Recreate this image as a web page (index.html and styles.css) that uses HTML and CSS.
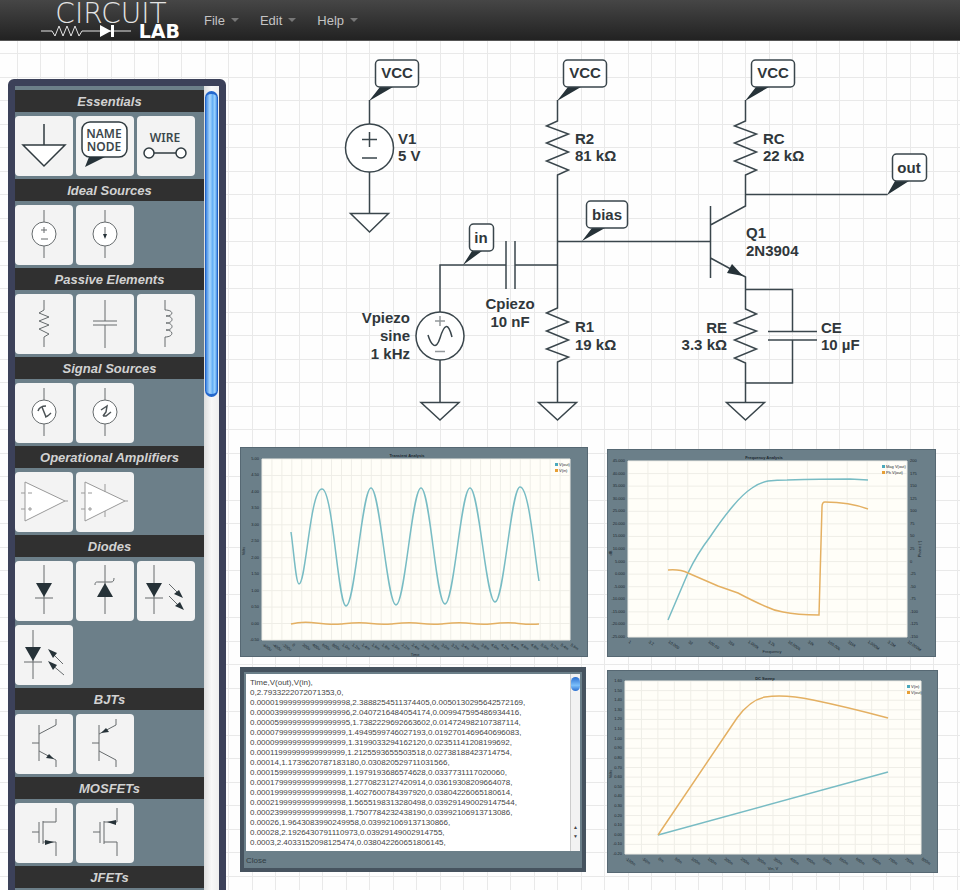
FILE: index.html
```html
<!DOCTYPE html>
<html lang="en">
<head>
  <meta charset="UTF-8">
  <meta name="viewport" content="width=device-width, initial-scale=1.0">
  <title>CircuitLab</title>
  <link rel="stylesheet" href="styles.css">
</head>
<body>
  <header class="topbar">
    <svg class="logo" viewBox="0 0 140 40" role="img" aria-label="CircuitLab">
      <text class="logo-circuit" x="70" y="23" text-anchor="middle">CIRCUIT</text>
      <path class="logo-line" d="M0 31h11l3 5 4-10 4 10 4-10 4 10 4-10 4 10 3-5h49"/>
      <path class="logo-diode" d="M59 25v12l11-6zM70 25h3v12h-3z"/>
      <text class="logo-lab" x="139" y="38" text-anchor="end">LAB</text>
    </svg>
    <nav class="menu">
      <button>File <span class="caret"></span></button>
      <button>Edit <span class="caret"></span></button>
      <button>Help <span class="caret"></span></button>
    </nav>
  </header>

  <main class="editor">
    <aside class="palette">
      <div class="parts">
        <h2>Essentials</h2>
        <div class="tiles">
          <button class="tile" aria-label="Ground"><svg class="strong" viewBox="0 0 58 60"><path class="fill-white" d="M29 8v21M8 29h42L29 50z"/></svg></button>
          <button class="tile" aria-label="Name node">
            <svg class="strong" viewBox="0 0 58 60">
              <rect class="fill-white" x="6" y="6" width="45" height="35" rx="8"/>
              <path class="fill-dark" d="M13 41h16L9 51z"/>
              <text x="28" y="22">NAME</text>
              <text x="28" y="35">NODE</text>
            </svg>
          </button>
          <button class="tile" aria-label="Wire">
            <svg class="strong" viewBox="0 0 58 60">
              <text x="28" y="26">WIRE</text>
              <path d="M17 37h22"/><circle class="fill-white" cx="12" cy="37" r="5"/><circle class="fill-white" cx="44" cy="37" r="5"/>
            </svg>
          </button>
        </div>

        <h2>Ideal Sources</h2>
        <div class="tiles">
          <button class="tile" aria-label="Voltage source"><svg viewBox="0 0 58 60"><path d="M29 5v48"/><circle class="fill-white" cx="29" cy="29" r="12"/><path d="M26 25h6M29 22v6M26 34h7"/></svg></button>
          <button class="tile" aria-label="Current source"><svg viewBox="0 0 58 60"><path d="M29 5v48"/><circle class="fill-white" cx="29" cy="29" r="12"/><path d="M29 22v10"/><path class="fill-dark" d="M27 29h4l-2 5z"/></svg></button>
        </div>

        <h2>Passive Elements</h2>
        <div class="tiles">
          <button class="tile" aria-label="Resistor"><svg viewBox="0 0 58 60"><path d="M29 6v10l-5 3 10 4-10 4 10 4-10 4 10 5-5 3v10"/></svg></button>
          <button class="tile" aria-label="Capacitor"><svg viewBox="0 0 58 60"><path d="M29 6v21M17 27h24M17 31h24M29 31v23"/></svg></button>
          <button class="tile" aria-label="Inductor"><svg viewBox="0 0 58 60"><path d="M28 6v10c9 0 9 6 1 6 8 0 8 7 0 7 8 0 8 7 0 7 8 0 8 7-1 7v10"/></svg></button>
        </div>

        <h2>Signal Sources</h2>
        <div class="tiles">
          <button class="tile" aria-label="Sine source"><svg viewBox="0 0 58 60"><path d="M29 5v48"/><circle class="fill-white" cx="29" cy="29" r="12"/><path class="wave" d="M23 28c1-3 4-5 8-5M27 24l4 10M30 34c2 0 4-2 6-4"/></svg></button>
          <button class="tile" aria-label="Square source"><svg viewBox="0 0 58 60"><path d="M29 5v48"/><circle class="fill-white" cx="29" cy="29" r="12"/><path class="wave" d="M25 27l6-4-1 6-3 4M27 33h3l5-4"/></svg></button>
        </div>

        <h2>Operational Amplifiers</h2>
        <div class="tiles">
          <button class="tile" aria-label="Op-amp"><svg class="light" viewBox="0 0 58 60"><path class="fill-white" d="M10 10v39l40-20z"/><path d="M6 21h4M6 37h4M50 29h3M13 21h4M13 37h4M15 35v4"/></svg></button>
          <button class="tile" aria-label="Op-amp with supply"><svg class="light" viewBox="0 0 58 60"><path class="fill-white" d="M9 10v39l40-20z"/><path d="M5 21h4M5 37h4M49 29h3M12 21h4M12 37h4M14 35v4M29 12v8M29 39v6"/></svg></button>
        </div>

        <h2>Diodes</h2>
        <div class="tiles">
          <button class="tile" aria-label="Diode"><svg viewBox="0 0 58 60"><path d="M29 4v49M20 37h18"/><path class="fill-dark" d="M21 22h16l-8 14z"/></svg></button>
          <button class="tile" aria-label="Zener diode"><svg viewBox="0 0 58 60"><path d="M29 4v49M19 24c0-3 1-3 3-3h13c2 0 3-1 3-4"/><path class="fill-dark" d="M21 36h16l-8-14z"/></svg></button>
          <button class="tile" aria-label="LED"><svg viewBox="0 0 58 60"><path d="M17 4v49M8 37h18M32 23l12 12M32 35l12 12"/><path class="fill-dark" d="M9 22h16l-8 14zM46 37l-9-4 5-4zM47 49l-9-4 5-4z"/></svg></button>
          <button class="tile" aria-label="Photodiode"><svg viewBox="0 0 58 60"><path d="M18 5v49M9 37h18M48 39L36 27M49 50L36 39"/><path class="fill-dark" d="M10 22h16l-8 14zM33 24l9 4-4 5zM33 36l9 4-4 5z"/></svg></button>
        </div>

        <h2>BJTs</h2>
        <div class="tiles">
          <button class="tile" aria-label="NPN transistor"><svg viewBox="0 0 58 60"><path d="M24 11v36M17 29h7M24 20l17-9V5M24 37l17 9v7"/><path class="fill-dark" d="M39 45l-8-1 3-4z"/></svg></button>
          <button class="tile" aria-label="PNP transistor"><svg viewBox="0 0 58 60"><path d="M23 11v36M16 29h7M23 20l17-9V5M23 37l17 9v7"/><path class="fill-dark" d="M25 19l5-5 3 4z"/></svg></button>
        </div>

        <h2>MOSFETs</h2>
        <div class="tiles">
          <button class="tile" aria-label="N-channel MOSFET"><svg viewBox="0 0 58 60"><path d="M17 29h7M24 19v21M28 18v23M28 19h13V5M28 39h13v14"/><path class="fill-dark" d="M30 37l9 2-9 3z"/></svg></button>
          <button class="tile" aria-label="P-channel MOSFET"><svg viewBox="0 0 58 60"><path d="M17 29h7M24 19v21M28 18v23M28 19h13V5M28 39h13v14"/><path class="fill-dark" d="M40 17l-9 2 9 3z"/></svg></button>
        </div>

        <h2>JFETs</h2>
      </div>
      <div class="scrollbar"><div class="thumb"></div></div>
    </aside>

    <section class="workspace">
      <svg class="schematic" viewBox="226 41 734 406" role="img" aria-label="Transistor amplifier schematic">
        <!-- supply -->
        <path d="M369.500 100v24M369.500 172v41"/>
        <circle cx="369.500" cy="148" r="24"/>
        <path d="M362 139.500h15M369.500 132v15M362 158h15"/>
        <path class="ground" d="M350.500 213.500h38L369.500 232z"/>
        <text x="398" y="144">V1</text><text x="398" y="161">5 V</text>

        <!-- bias divider -->
        <path d="M557.500 100v21l-11 5 22 8-22 9 22 9-22 9 22 9-11 5v133l-11 5 22 9-22 9 22 9-22 9 22 8-11 5v40"/>
        <path class="ground" d="M538.500 402.500h38L557.500 420z"/>
        <text x="575" y="144">R2</text><text x="575" y="161">81 kΩ</text>
        <text x="575" y="332">R1</text><text x="575" y="350">19 kΩ</text>

        <!-- piezo input -->
        <path d="M440 312v-47h66M515 265h42M506 241v48M515 241v48M440 360v42"/>
        <circle cx="440" cy="336" r="24"/>
        <path class="sine" d="M428 335c3 10 8 16 12 3s8-17 12-1"/>
        <path class="faint" d="M435 321h10M440 316v10M435 351.500h10"/>
        <path class="ground" d="M421 402.500h38L440 420z"/>
        <g class="end"><text x="410" y="323">Vpiezo</text><text x="410" y="341">sine</text><text x="410" y="359">1 kHz</text></g>
        <g class="middle"><text x="510" y="309">Cpiezo</text><text x="510" y="327">10 nF</text></g>

        <!-- transistor stage -->
        <path d="M745.500 100v21l-11 5 22 8-22 9 22 9-22 9 22 9-11 5v31l-35 19M745.500 194.500h142M557.500 241.500h153M710.500 206v72M710.500 258l35 19v32l11 5-22 9 22 8-22 9 22 9-22 9 11 5v39M745.500 289.500h47v42M768 331.500h49M768 340h49M792.500 340v43h-47"/>
        <path class="fill-dark" d="M743 276l-16-3 5-9z"/>
        <path class="ground" d="M726.500 402.500h38L745.500 420z"/>
        <text x="763" y="144">RC</text><text x="763" y="161">22 kΩ</text>
        <text x="746" y="238">Q1</text><text x="746" y="256">2N3904</text>
        <g class="end"><text x="727" y="333">RE</text><text x="727" y="350">3.3 kΩ</text></g>
        <text x="821" y="333">CE</text><text x="821" y="350">10 µF</text>

        <!-- node names -->
        <g class="middle">
          <path class="fill-dark" d="M380 87h13l-24 14zM568 87h13l-24 14zM756 87h13l-24 14zM592 228h13l-23 13zM472 251h10l-19 14zM895 181h14l-22 14z"/>
          <rect x="375.500" y="60" width="43" height="27" rx="4"/><text x="397" y="78">VCC</text>
          <rect x="563.500" y="60" width="43" height="27" rx="4"/><text x="585" y="78">VCC</text>
          <rect x="751.500" y="60" width="43" height="27" rx="4"/><text x="773" y="78">VCC</text>
          <rect x="586.500" y="201" width="41" height="27" rx="4"/><text x="607" y="220">bias</text>
          <rect x="469.500" y="224" width="24" height="27" rx="4"/><text x="481" y="243">in</text>
          <rect x="892.500" y="154" width="34" height="27" rx="4"/><text x="909" y="173">out</text>
        </g>
      </svg>

      <div class="results">
        <div class="column">
          <svg class="chart" id="transient" viewBox="0 0 348 210" role="img" aria-label="Transient analysis">
            <g class="axes"></g>
            <path class="trace-a" d="M51 85C54 106 56 137 59 137C66 137 70 42 82 42C93 42 98 159 106 159C115 159 122 41 131 41C140 41 147 158 156 158C165 158 172 41 181 41C190 41 196 157 205 157C214 157 221 41 230 41C239 41 246 155 255 155C264 155 271 40 280 40C289 40 294 104 299 134"/>
            <path class="trace-b" d="M51 177C59 175 68 175 76 176S92 178 101 177S117 175 126 176S142 178 151 177S167 175 176 176S192 178 201 177S217 175 226 176S242 178 250 177S266 175 275 176S290 178 299 177"/>
          </svg>
          <div class="export">
            <div class="export-box">
              <textarea aria-label="Simulation data" readonly wrap="off">Time,V(out),V(in),
0,2.7933222072071353,0,
0.000019999999999999998,2.3888254511374405,0.0050130295642572169,
0.000039999999999999996,2.0407216484054174,0.009947595486934416,
0.000059999999999999995,1.7382229692663602,0.014724982107387114,
0.00007999999999999999,1.4949599746027193,0.0192701469640696083,
0.00009999999999999999,1.3199033294162120,0.02351141208199692,
0.00011999999999999999,1.2125593655503518,0.02738188423714754,
0.00014,1.1739620787183180,0.030820529711031566,
0.00015999999999999999,1.1979193686574628,0.0337731117020060,
0.00017999999999999998,1.2770823127420914,0.03619308209664078,
0.00019999999999999998,1.4027600784397920,0.03804226065180614,
0.00021999999999999998,1.5655198313280498,0.039291490029147544,
0.00023999999999999998,1.7507784232438190,0.03992106913713086,
0.00026,1.9643083990249958,0.039921069137130866,
0.00028,2.1926430791110973,0.03929149002914755,
0.0003,2.4033152098125474,0.038042260651806145,</textarea>
              <div class="mini-scroll"><span class="mini-thumb"></span><span class="arrow">▲</span><span class="arrow">▼</span></div>
            </div>
            <button class="close">Close</button>
          </div>
        </div>
        <div class="column right">
          <svg class="chart narrow" id="frequency" viewBox="0 0 329 208" role="img" aria-label="Frequency analysis">
            <g class="axes"></g>
            <path class="trace-a" d="M61 171L81 124Q90 105 103 88Q115 70 126 57Q136 45 145 39Q152 34 161 32Q170 31 180 31Q215 30 243 30L261 31"/>
            <path class="trace-b" d="M61 121Q73 120 81 124L111 137L131 144Q148 153 160 158Q168 162 176 163Q190 166 212 166L215 58Q215 53 218 53Q242 53 261 60"/>
          </svg>
          <svg class="chart" id="sweep" viewBox="0 0 331 203" role="img" aria-label="DC sweep">
            <g class="axes"></g>
            <path class="trace-a" d="M51 165L281 102"/>
            <path class="trace-b" d="M51 165L130 48Q143 30 158 27Q178 24 206 30Q240 37 281 48"/>
          </svg>
        </div>
      </div>
    </section>
  </main>

  <script src="charts.js"></script>
</body>
</html>
```
FILE: styles.css
```css
* {
  margin: 0;
  padding: 0;
  box-sizing: border-box;
}

body {
  font-family: "Liberation Sans", Arial, sans-serif;
  height: 100vh;
  overflow: hidden;
  display: flex;
  flex-direction: column;
  background-color: #fefefe;
}

button {
  border: none;
  background: none;
  font-family: inherit;
  cursor: pointer;
}

svg {
  display: block;
}

/* Top bar */
.topbar {
  display: flex;
  flex: none;
  height: 41px;
  padding-left: 41px;
  background: linear-gradient(#464646, #222);
  border-bottom: 1px solid #555;
}

.logo {
  width: 140px;
  height: 40px;
  overflow: visible;
}

.logo-circuit {
  font-family: "DejaVu Sans", sans-serif;
  font-weight: 200;
  font-size: 28px;
  fill: #e4e4e4;
}

.logo-lab {
  font-family: "DejaVu Sans", sans-serif;
  font-weight: bold;
  font-size: 19px;
  fill: #fff;
}

.logo-line {
  fill: none;
  stroke: #e4e4e4;
}

.logo-diode {
  fill: #fff;
}

.menu {
  display: flex;
  gap: 21px;
  padding-left: 23px;
}

.menu button {
  display: flex;
  align-items: center;
  gap: 6px;
  font-size: 13px;
  color: #c4c4c4;
}

.caret {
  border: 4px solid transparent;
  border-top-color: #777;
  border-bottom: none;
}

/* Editor, drawn on 47px graph paper with a line in the middle */
.editor {
  display: flex;
  flex: 1;
  min-height: 0;
  background-image:
    linear-gradient(90deg, #e9e9e9 1px, transparent 1px),
    linear-gradient(90deg, #e9e9e9 1px, transparent 1px),
    linear-gradient(#e9e9e9 1px, transparent 1px),
    linear-gradient(#e9e9e9 1px, transparent 1px);
  background-size: 47px 47px;
  background-position: 17px 0, 40px 0, 0 12px, 0 36px;
}

/* Parts palette */
.palette {
  display: flex;
  flex: none;
  width: 218px;
  margin: 38px 0 -20px 8px;
  border: 7px solid #3c4159;
  border-radius: 6px;
  background-color: #6c7f89;
  overflow: hidden;
}

.parts {
  flex: 1;
  padding-top: 4px;
}

.parts h2 {
  height: 22px;
  line-height: 23px;
  font-size: 13px;
  font-style: italic;
  text-align: center;
  color: #d2d2d2;
  background-color: #303030;
}

.tiles {
  display: flex;
  flex-wrap: wrap;
  gap: 4px 3px;
  padding: 4px 0 3px;
}

.tile {
  width: 58px;
  height: 60px;
  border-radius: 4px;
  background-color: #f3f3f3;
}

.tile svg {
  width: 100%;
  fill: none;
  stroke: #666b6d;
}

.tile svg.light {
  stroke: #999;
}

.tile svg.strong {
  stroke: #303b40;
  stroke-width: 1.500;
}

.tile .wave {
  stroke: #4c5356;
  stroke-width: 1.500;
}

.tile text {
  font-family: "Noto Sans", sans-serif;
  font-weight: 600;
  font-size: 12px;
  text-anchor: middle;
  fill: #3c474c;
  stroke: none;
}

.tile .fill-white {
  fill: #fff;
}

.tile .fill-dark {
  fill: #263238;
  stroke: none;
}

.scrollbar {
  width: 15px;
  background: linear-gradient(90deg, #ddd, #f8f8f8 50%, #eee);
}

.thumb {
  height: 306px;
  margin: 5px 1px 0;
  border: 1px solid #2367cc;
  border-width: 3px 1px;
  border-radius: 7px;
  background: linear-gradient(90deg, #3e86e0, #a9d8ff 35%, #64aef5 60%, #9bd3ff 80%, #4288df);
}

/* Schematic */
.workspace {
  flex: 1;
  min-width: 0;
}

.schematic {
  width: 100%;
  fill: none;
  stroke: #3a464c;
  stroke-width: 1.500;
}

.schematic rect,
.schematic circle,
.schematic .ground {
  fill: #fff;
}

.schematic .fill-dark {
  fill: #263238;
  stroke: none;
}

.schematic .faint {
  stroke: #92989b;
}

.schematic text {
  font-weight: bold;
  font-size: 15px;
  fill: #30373b;
  stroke: none;
}

.schematic .middle text {
  text-anchor: middle;
}

.schematic .end text {
  text-anchor: end;
}

/* Results */
.results {
  display: grid;
  grid-template-columns: 348fr 331fr;
  gap: 19px;
  padding: 0 22px 0 14px;
}

.column {
  display: flex;
  flex-direction: column;
  gap: 10px;
}

.column.right {
  gap: 13px;
  padding-top: 2px;
}

.chart {
  background-color: #6b7f89;
  outline: 1px solid #566873;
  outline-offset: -1px;
}

.narrow {
  margin-right: 2px;
}

.chart .plot {
  fill: #fffef8;
}

.chart .lines {
  stroke: #efeee7;
  stroke-width: 1;
}

.chart text {
  font-size: 4px;
  fill: #1c282f;
}

.chart .title {
  font-weight: bold;
}

.trace-a,
.trace-b {
  fill: none;
  stroke: #78bcc4;
  stroke-width: 1.500;
}

.trace-b {
  stroke: #e4b062;
}

.key-a {
  fill: #4ba9bd;
}

.key-b {
  fill: #e79f35;
}

/* Data export */
.export {
  margin-right: 2px;
  padding: 2px 2px 0;
  border: 4px solid #46535f;
  border-top-width: 5px;
  background-color: #6b7f89;
}

.export-box {
  display: flex;
  height: 177px;
  background-color: #fff;
}

.export textarea {
  flex: 1;
  min-width: 0;
  padding: 4px 4px 0;
  border: none;
  resize: none;
  overflow: hidden;
  font-family: inherit;
  font-size: 8px;
  line-height: 10px;
  color: #444;
}

.mini-scroll {
  display: flex;
  flex-direction: column;
  width: 10px;
  padding: 3px 0 10px;
  background-color: #f2f2f2;
  border-left: 1px solid #ccc;
}

.mini-thumb {
  height: 14px;
  margin-bottom: auto;
  border-radius: 5px;
  background: linear-gradient(#2b6fd0, #7cc0fb 60%, #2b6fd0);
}

.arrow {
  font-size: 5px;
  line-height: 9px;
  text-align: center;
  color: #444;
}

.close {
  display: block;
  height: 15px;
  margin-top: 2px;
  font-size: 8px;
  color: #303c43;
}
```
FILE: charts.js
```js
// Axes, grid lines and legends for the three result charts
const charts = {
  transient: {
    plot: [22, 12, 308, 181],
    title: "Transient Analysis",
    titleX: 167,
    xLabel: "Time",
    yLabel: "Volts",
    x: range(-0.6, 0.2, 32, v => Math.abs(v) < 0.01 ? "0" : v < 1 ? Math.round(v * 1000) + "u" : v.toFixed(1) + "m"),
    y: range(5, -0.5, 12, v => v === 0 ? "0.00" : v.toFixed(2)),
    legend: ["V(out)", "V(in)"],
    legendX: 316
  },
  frequency: {
    plot: [21, 12, 279, 176],
    title: "Frequency Analysis",
    titleX: 157,
    xLabel: "Frequency",
    yLabel: "dB",
    rightLabel: "Phase (°)",
    x: ["1", "3.2", "10.000", "32", "100.00", "316", "1.000k", "3.2k", "10.000k", "32k", "100.00k", "316k", "1.000M", "3.2M", "10.000M"],
    y: range(45, -5, 15, v => v.toFixed(3)),
    right: range(200, -25, 15, v => String(v)),
    legend: ["Mag V(out)", "Ph V(out)"],
    legendX: 276
  },
  sweep: {
    plot: [18, 11, 296, 173],
    title: "DC Sweep",
    titleX: 158,
    xLabel: "Vin, V",
    yLabel: "Volts",
    x: range(-100, 50, 19, v => v + "m"),
    y: range(1.6, -0.1, 19, v => v.toFixed(2)),
    legend: ["V(in)", "V(out)"],
    legendX: 301
  }
};

function range(start, step, count, format) {
  return Array.from({ length: count }, (_, i) => format(Math.round((start + step * i) * 1000) / 1000));
}

function text(x, y, label, extra) {
  return `<text x="${x}" y="${y}" ${extra || ""}>${label}</text>`;
}

Object.keys(charts).forEach(id => {
  const c = charts[id];
  const [left, top, width, height] = c.plot;
  const bottom = top + height;
  let lines = "";
  let out = `<rect class="plot" x="${left}" y="${top}" width="${width}" height="${height}"/>`;

  c.x.forEach((label, i) => {
    const x = left + width * i / (c.x.length - 1);
    lines += `M${x} ${top}V${bottom}`;
    out += text(x + 1, bottom + 5, label, `transform="rotate(35 ${x} ${bottom + 4})"`);
  });
  c.y.forEach((label, i) => {
    const y = top + height * i / (c.y.length - 1);
    lines += `M${left} ${y}H${left + width}`;
    out += text(left - 3, y + 1, label, 'text-anchor="end"');
    if (c.right) out += text(left + width + 3, y + 1, c.right[i]);
  });
  out += `<path class="lines" d="${lines}"/>`;

  out += text(c.titleX, 10, c.title, 'class="title" text-anchor="middle"');
  out += text(c.titleX + 8, bottom + 16, c.xLabel, 'text-anchor="middle"');
  out += text(5, 104, c.yLabel, 'text-anchor="middle" transform="rotate(-90 5 104)"');
  if (c.rightLabel) out += text(314, 100, c.rightLabel, 'text-anchor="middle" transform="rotate(-90 314 100)"');

  c.legend.forEach((label, i) => {
    out += `<rect class="${i ? "key-b" : "key-a"}" x="${c.legendX - 1}" y="${top + 4 + i * 6}" width="3" height="3"/>`;
    out += text(c.legendX + 3, top + 7 + i * 6, label);
  });
  document.querySelector(`#${id} .axes`).innerHTML = out;
});
```
